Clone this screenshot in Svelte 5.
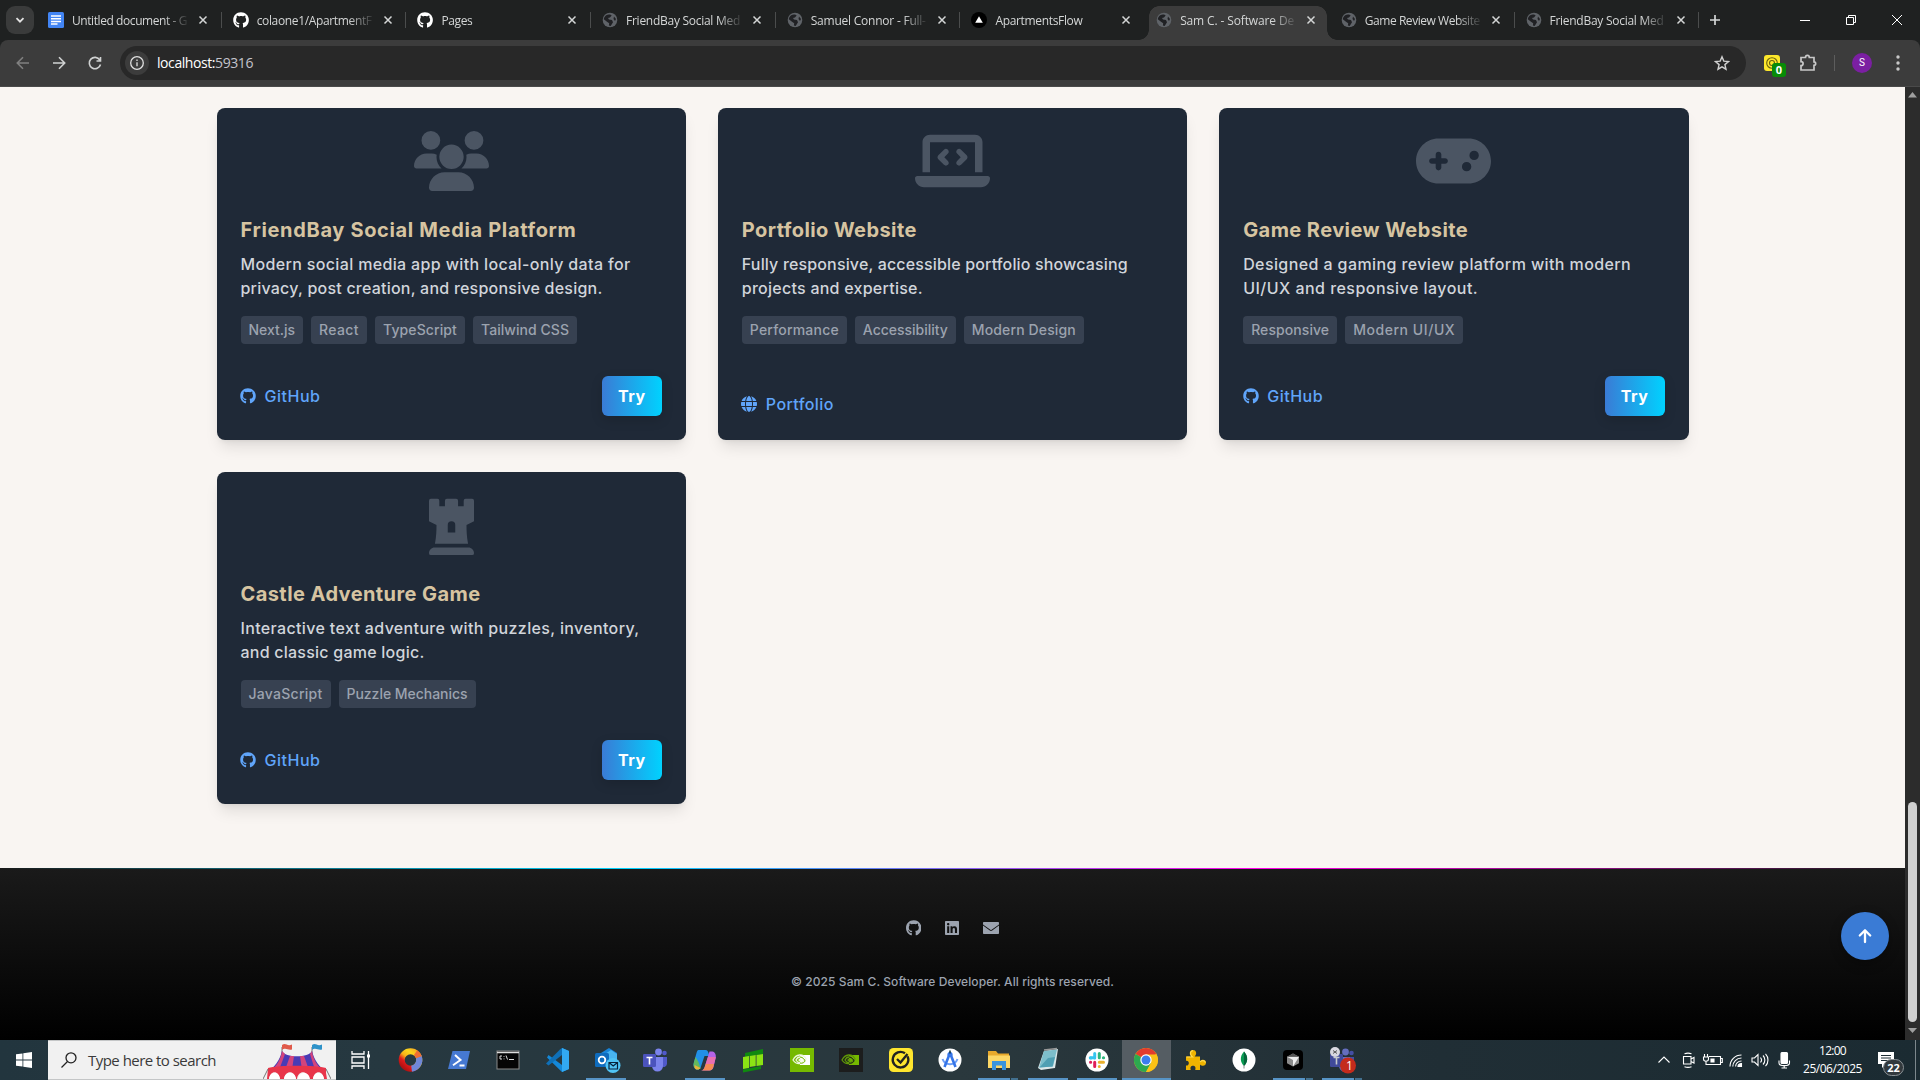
<script>
  const github =
    '<path d="M244.8 8C106.1 8 0 113.3 0 252c0 110.9 69.8 205.8 169.5 239.2 12.8 2.3 17.3-5.6 17.3-12.1 0-6.2-.3-40.4-.3-61.4 0 0-70 15-84.7-29.8 0 0-11.4-29.1-27.8-36.6 0 0-22.9-15.7 1.6-15.4 0 0 24.9 2 38.6 25.8 21.9 38.6 58.6 27.5 72.9 20.9 2.3-16 8.8-27.1 16-33.7-55.9-6.2-112.3-14.3-112.3-110.5 0-27.5 7.6-41.3 23.6-58.9-2.6-6.5-11.1-33.3 2.6-67.9 20.9-6.5 69 27 69 27 20-5.6 41.5-8.5 62.8-8.5s42.8 2.9 62.8 8.5c0 0 48.1-33.6 69-27 13.7 34.7 5.2 61.4 2.6 67.9 16 17.7 25.8 31.5 25.8 58.9 0 96.5-58.9 104.2-114.8 110.5 9.2 7.9 17 22.9 17 46.4 0 33.7-.3 75.4-.3 83.6 0 6.5 4.6 14.4 17.3 12.1C428.2 457.8 496 362.9 496 252 496 113.3 383.5 8 244.8 8z"/>';

  // Glyphs share a 512-unit height; the width varies per glyph.
  const glyphs = {
    github: { w: 496, body: github },
    globe: {
      w: 512,
      body: '<path d="M352 256c0 22.2-1.2 43.6-3.3 64H163.3c-2.2-20.4-3.3-41.8-3.3-64s1.2-43.6 3.3-64H348.7c2.2 20.4 3.3 41.8 3.3 64zm28.8-64H503.9c5.3 20.5 8.1 41.9 8.1 64s-2.8 43.5-8.1 64H380.8c2.1-20.6 3.2-42 3.2-64s-1.1-43.4-3.2-64zm112.6-32H376.7c-10-63.9-29.8-117.4-55.3-151.6c78.3 20.7 142 77.5 171.9 151.6zm-149.1 0H167.7c6.1-36.4 15.5-68.6 27-94.7c10.5-23.6 22.2-40.7 33.5-51.5C239.4 3.2 248.7 0 256 0s16.6 3.2 27.8 13.8c11.3 10.8 23 27.9 33.5 51.5c11.6 26 20.9 58.2 27 94.7zm-209 0H18.6C48.6 85.9 112.2 29.1 190.6 8.4C165.1 42.6 145.3 96.1 135.3 160zM8.1 192H131.2c-2.1 20.6-3.2 42-3.2 64s1.1 43.4 3.2 64H8.1C2.8 299.5 0 278.1 0 256s2.8-43.5 8.1-64zM194.7 446.6c-11.6-26-20.9-58.2-27-94.6H344.3c-6.1 36.4-15.5 68.6-27 94.6c-10.5 23.6-22.2 40.7-33.5 51.5C272.6 508.8 263.3 512 256 512s-16.6-3.2-27.8-13.8c-11.3-10.8-23-27.9-33.5-51.5zM135.3 352c10 63.9 29.8 117.4 55.3 151.6C112.2 482.9 48.6 426.1 18.6 352H135.3zm358.1 0c-30 74.1-93.6 130.9-171.9 151.6c25.5-34.2 45.2-87.7 55.3-151.6H493.4z"/>'
    },
    linkedin: {
      w: 448,
      body: '<path d="M416 32H31.9C14.3 32 0 46.5 0 64.3v383.4C0 465.5 14.3 480 31.9 480H416c17.6 0 32-14.5 32-32.3V64.3c0-17.8-14.4-32.3-32-32.3zM135.4 416H69V202.2h66.5V416zm-33.2-243c-21.3 0-38.5-17.3-38.5-38.5S80.9 96 102.2 96c21.2 0 38.5 17.3 38.5 38.5 0 21.3-17.2 38.5-38.5 38.5zm282.1 243h-66.4V312c0-24.8-.5-56.7-34.5-56.7-34.6 0-39.9 27-39.9 54.9V416h-66.4V202.2h63.7v29.2h.9c8.9-16.8 30.6-34.5 62.9-34.5 67.2 0 79.7 44.3 79.7 101.9V416z"/>'
    },
    envelope: {
      w: 512,
      body: '<path d="M32 64C14 64 0 78 0 96v30c0 9 4 17 11 22l226 166c11 8 27 8 38 0L501 148c7-5 11-13 11-22V96c0-18-14-32-32-32H32zM0 176V416c0 18 14 32 32 32H480c18 0 32-14 32-32V176L294.4 339.2c-22.8 17.1-54 17.1-76.8 0L0 176z"/>'
    },
    users: {
      w: 640,
      body: '<path d="M144 0a80 80 0 1 1 0 160A80 80 0 1 1 144 0zM512 0a80 80 0 1 1 0 160A80 80 0 1 1 512 0zM0 298.7C0 239.8 47.8 192 106.7 192h42.7c15.9 0 31 3.5 44.6 9.7c-1.3 7.2-1.9 14.7-1.9 22.3c0 38.2 16.8 72.5 43.3 96H21.3C9.6 320 0 310.4 0 298.7zM404.6 320c26.6-23.5 43.3-57.8 43.3-96c0-7.6-.7-15-1.9-22.3c13.6-6.3 28.7-9.7 44.6-9.7h42.7C592.2 192 640 239.8 640 298.7c0 11.8-9.6 21.3-21.3 21.3zM216 220a104 104 0 1 1 208 0 104 104 0 1 1-208 0zM128 485.3C128 411.7 187.7 352 261.3 352H378.7C452.3 352 512 411.7 512 485.3c0 14.7-11.9 26.7-26.7 26.7H154.7c-14.7 0-26.7-11.9-26.7-26.7z"/>'
    },
    laptop: {
      w: 640,
      body: '<path d="M64 96c0-35.3 28.7-64 64-64H512c35.3 0 64 28.7 64 64V352H512V96H128V352H64V96zM0 403.2C0 392.6 8.6 384 19.2 384H620.8c10.6 0 19.2 8.6 19.2 19.2c0 42.4-34.4 76.8-76.8 76.8H76.8C34.4 480 0 445.6 0 403.2zM281 193l-31 31 31 31c9.4 9.4 9.4 24.6 0 33.9s-24.6 9.4-33.9 0l-48-48c-9.4-9.4-9.4-24.6 0-33.9l48-48c9.4-9.4 24.6-9.4 33.9 0s9.4 24.6 0 33.9zM393 159l48 48c9.4 9.4 9.4 24.6 0 33.9l-48 48c-9.4 9.4-24.6 9.4-33.9 0s-9.4-24.6 0-33.9l31-31-31-31c-9.4-9.4-9.4-24.6 0-33.9s24.6-9.4 33.9 0z"/>'
    },
    gamepad: {
      w: 640,
      body: '<path d="M192 64C86 64 0 150 0 256S86 448 192 448H448c106 0 192-86 192-192s-86-192-192-192H192zM496 168a40 40 0 1 1 0 80 40 40 0 1 1 0-80zM392 304a40 40 0 1 1 80 0 40 40 0 1 1-80 0zM168 200c0-13.3 10.7-24 24-24s24 10.7 24 24v32h32c13.3 0 24 10.7 24 24s-10.7 24-24 24H216v32c0 13.3-10.7 24-24 24s-24-10.7-24-24V280H136c-13.3 0-24-10.7-24-24s10.7-24 24-24h32V200z"/>'
    },
    rook: {
      w: 384,
      body: '<path d="M368 32h-56a16 16 0 0 0-16 16v48h-48V48a16 16 0 0 0-16-16h-80a16 16 0 0 0-16 16v48H88V48a16 16 0 0 0-16-16H16A16 16 0 0 0 0 48v176l64 32c0 48.3-1.5 95-13.2 160h282.4C321.5 351 320 303.7 320 256l64-32V48a16 16 0 0 0-16-16zM224 320h-64v-64a32 32 0 0 1 64 0zM336 448H48c-26.5 0-48 21.5-48 48a16 16 0 0 0 16 16h352a16 16 0 0 0 16-16c0-26.5-21.5-48-48-48z"/>'
    }
  };

  const globeFav =
    '<circle cx="8" cy="8" r="7.3" fill="#5f6368"/><path d="M4.2 3.2C6 2 8.800 2.300 9.600 3.500L8 5.400l-2 .5 1 1.700 3 .4 1 2.300-2.300 3.600-1.800-.4.3-2.300L5 9.700 1.800 7.300C1.900 5.500 3 4 4.200 3.200z" fill="#202124"/><path d="M12 4.500l2 2.500-1 2-1.500-2z" fill="#202124"/>';
  const githubFav = `<g fill="#fff" transform="translate(.2 0) scale(.0316)">${github}</g>`;
  const favicons = {
    docs: '<rect width="16" height="16" rx="1.500" fill="#4285f4"/><path d="M3 4h10M3 6.700h10M3 9.400h10M3 12.100h6.500" stroke="#fff" stroke-width="1.500"/>',
    github: githubFav,
    globe: globeFav,
    flow: '<circle cx="8" cy="8" r="8" fill="#000"/><path d="M8 4.300l3.800 6.500H4.200z" fill="#fff"/>'
  };

  const tabs = [
    { icon: 'docs', title: 'Untitled document - G', w: 115 },
    { icon: 'github', title: 'colaone1/ApartmentF', w: 115 },
    { icon: 'github', title: 'Pages', w: 31 },
    { icon: 'globe', title: 'FriendBay Social Med', w: 114 },
    { icon: 'globe', title: 'Samuel Connor - Full-', w: 115 },
    { icon: 'flow', title: 'ApartmentsFlow', w: 87 },
    { icon: 'globe', title: 'Sam C. - Software De', w: 114, active: true },
    { icon: 'globe', title: 'Game Review Website', w: 115 },
    { icon: 'globe', title: 'FriendBay Social Med', w: 114 }
  ];

  const projects = [
    {
      icon: 'users', title: 'FriendBay Social Media Platform', tw: 336,
      lines: [['Modern social media app with local-only data for', 390], ['privacy, post creation, and responsive design.', 362]],
      tags: [['Next.js', 46.5], ['React', 40], ['TypeScript', 74], ['Tailwind CSS', 88]],
      link: ['GitHub', 56], glyph: 'github', demo: true
    },
    {
      icon: 'laptop', title: 'Portfolio Website', tw: 175,
      lines: [['Fully responsive, accessible portfolio showcasing', 386], ['projects and expertise.', 181]],
      tags: [['Performance', 89], ['Accessibility', 85], ['Modern Design', 104]],
      link: ['Portfolio', 68], glyph: 'globe', demo: false
    },
    {
      icon: 'gamepad', title: 'Game Review Website', tw: 225,
      lines: [['Designed a gaming review platform with modern', 388], ['UI/UX and responsive layout.', 235]],
      tags: [['Responsive', 78], ['Modern UI/UX', 102]],
      link: ['GitHub', 56], glyph: 'github', demo: true
    },
    {
      icon: 'rook', title: 'Castle Adventure Game', tw: 240,
      lines: [['Interactive text adventure with puzzles, inventory,', 399], ['and classic game logic.', 184]],
      tags: [['JavaScript', 74], ['Puzzle Mechanics', 121]],
      link: ['GitHub', 56], glyph: 'github', demo: true
    }
  ];

  const teams =
    '<circle cx="15.500" cy="4" r="3.400" fill="#7b83eb"/><circle cx="21.500" cy="5" r="2.300" fill="#5059c9"/><path d="M18 9h6v7a3.500 3.500 0 0 1-6 2z" fill="#5059c9"/><path d="M9 9h11v9a5.500 5.500 0 0 1-11 0z" fill="#7b83eb"/><rect y="6" width="13" height="13" rx="1.200" fill="#4b53bc"/><path d="M3.500 9.500h6M6.500 9.500v7" stroke="#fff" stroke-width="1.600"/>';
  const eye =
    '<path d="M3 12c3-6 10-7 13-1-3 5-9 7-13 1zm3 0c2-4 6-4 8 0-2 3-6 4-8 0z" fill="none" stroke="COL" stroke-width="1.300"/><circle cx="10" cy="12" r="1.600" fill="COL"/>';

  const apps = [
    { body: '<path d="M3 3v3h12V3M3 21v-3h12v3M3 9h12v6H3zM19.500 3v18" fill="none" stroke="#fff" stroke-width="1.300"/><path d="M18 6.500h3v3h-3z" fill="#fff"/>' },
    { body: '<defs><linearGradient id="ring" x1="1" y1="0" x2=".15" y2="1"><stop offset="0" stop-color="#f5a623"/><stop offset=".3" stop-color="#fbd51c"/><stop offset=".55" stop-color="#f8b21a"/><stop offset=".75" stop-color="#e01b1b"/><stop offset="1" stop-color="#b01212"/></linearGradient></defs><circle cx="12.500" cy="12" r="8.800" fill="none" stroke="url(#ring)" stroke-width="6"/><path d="M20.600 8.500a8.800 8.800 0 0 1-7 12.200" fill="none" stroke="#6f87d8" stroke-width="6"/><path d="M17.500 4.800a8.800 8.800 0 0 1 3.400 4.500" fill="none" stroke="#ee6d33" stroke-width="6"/>' },
    { body: '<path d="M5.500 3H23l-4 18H1z" fill="#4679d2"/><path d="M8 7l5.500 5L6 17.200M12.500 17.500h5" fill="none" stroke="#fff" stroke-width="2"/>' },
    { body: '<rect x="1" y="3" width="22" height="18" fill="#050505" stroke="#8a8a8a"/><path d="M1 4.500h22" stroke="#ddd" stroke-width="1.500"/><path d="M6 8H4v3h2M8 8v.8M8 10.500v.8M10 7.500l1.500 4M13 11.500h5" fill="none" stroke="#ddd" stroke-width="1"/>' },
    { body: '<path d="M17 0l7 3v18l-7 3L2 9.500 3.500 7 17 17z" fill="#1488d8"/><path d="M17 0v7L3.500 17.500 1 15.500 15 1.500z" fill="#0f70b8"/><path d="M17 0l7 3v18l-7 3z" fill="#32a9f2"/>' },
    { run: true, body: '<g transform="translate(1 0)"><path d="M6 5l8-5 8 5v14H6z" fill="#1784d9"/><path d="M10 6l6-4 6 4v8H10z" fill="#49b5f0"/><rect y="5" width="14" height="14" rx="1.500" fill="#0f6cbd"/><circle cx="7" cy="12" r="3.300" fill="none" stroke="#fff" stroke-width="1.800"/><circle cx="18" cy="17.500" r="7.500" fill="#50c4f5"/><path d="M14 14.500h8.500v6.500H14zl4.200 3.500 4.300-3.500" fill="none" stroke="#08233c" stroke-width="1.200"/></g>' },
    { body: teams },
    { run: true, body: '<g transform="translate(-.5 0)"><path d="M7 2h7c2 0 2.500 1.500 3 3l1 3h-5L9 20c-1 1.500-3 2-5 1-2-1.500-2.500-4-1.500-7L5 5c.4-1.500 1-3 2-3z" fill="#2190e8"/><path d="M2.500 14L4 9l3 5 2 6c-1 1.500-3 2-5 1-2-1.500-2.500-4-1.500-7z" fill="#63b85e"/><path d="M3 17l6 3c-1 1.500-3 2-5 1-1-.8-1-2.500-1-4z" fill="#e8b438"/><path d="M18 3.500h3c2 0 4 3 3.200 6.500l-2.200 9c-.6 2-2 3.500-4 3.500H9.500c2 0 3-1.500 3.500-3z" fill="#b563e8"/><path d="M16.500 9h7.800l-1.800 7h-8.300z" fill="#ea6fb0"/><path d="M14.200 16h8.300l-.7 3c-.6 2-1.800 3.500-3.800 3.500H9.500c2 0 3-1.500 3.500-3z" fill="#f58b54"/></g>' },
    { body: '<path d="M4 5l18-4v5L4 9z" fill="#0f8a0f"/><path d="M2 9l6-1v12l-6 1zM8.700 8l6-1v11l-6 1zM15.500 7l6.500-1v11l-6.500 1z" fill="#8be314"/><path d="M2 21.500l18-3.500v3L2 24.500z" fill="#0f8a0f"/>' },
    { body: '<rect width="24" height="24" fill="#76b900"/><path d="M10 7h10v10H10z" fill="#fff"/>' + eye.replaceAll('COL', '#eef6dd') + '<path d="M10 9c3 0 5 3 5 4s-3 3-5 2" fill="none" stroke="#76b900"/>' },
    { body: '<rect width="24" height="24" fill="#1c1d1d"/><path d="M10 7h10v10H10z" fill="#76b900"/>' + eye.replaceAll('COL', '#5f9608') + '<path d="M10 9c3 0 5 3 5 4s-3 3-5 2" fill="none" stroke="#1c1d1d"/>' },
    { body: '<rect width="24" height="24" rx="4.500" fill="#fee52e"/><path d="M18.500 8.200A7.800 7.800 0 1 1 16 5.300" fill="none" stroke="#222" stroke-width="2.300"/><path d="M8 11l3.500 3.500L18.500 6" fill="none" stroke="#222" stroke-width="2.300"/>' },
    { body: '<circle cx="12" cy="12" r="11.500" fill="#fff"/><path d="M4.500 11a8 8 0 0 0 15 0" fill="none" stroke="#6ea0f7" stroke-width="2"/><path d="M12 5L6.500 19M12 5l5.500 14" fill="none" stroke="#3776e8" stroke-width="2.600"/><circle cx="12" cy="6.500" r="2.600" fill="#3776e8"/><path d="M12 2.500v3" stroke="#073042" stroke-width="1.500"/>' },
    { run: true, split: true, body: '<path d="M1 3h8l2 2.500h11V20H1z" fill="#e8a92c"/><path d="M1 7.500h22V20H1z" fill="#fcd766"/><path d="M5 22v-9h14v9h-4v-4.500H9V22z" fill="#3994dc"/>' },
    { run: true, body: '<path d="M8 3l14-2-3 19-14 2-3-2z" fill="#dce8ea"/><path d="M8 3l13-1.500-4 17-14 1z" fill="#7dbecb"/><path d="M12 10l7-1-2.500 9.500-13 1z" fill="#4f9fb3"/><path d="M8 2l13-1.500" stroke="#999" stroke-width="1.500"/>' },
    { run: true, body: '<circle cx="12" cy="12" r="11.500" fill="#fff"/><g fill="none" stroke-width="3" stroke-linecap="round"><path d="M9.700 5.500v4.500M5.500 10H6" stroke="#36c5f0"/><path d="M5.300 9.800h4.200" stroke="#36c5f0"/><path d="M14.300 5.500v4.300M18.400 9.800h.2" stroke="#2eb67d"/><path d="M14.300 14.300h4.200M14.300 18.500v.1" stroke="#ecb22e"/><path d="M9.700 14.300v4.300M5.500 14.300h.2" stroke="#e01e5a"/></g>' },
    { run: true, active: true, body: '<circle cx="12" cy="12" r="12" fill="#fbc116"/><path d="M12 12L1.600 6A12 12 0 0 1 22.400 6z" fill="#e33b2e"/><path d="M1.600 6A12 12 0 0 0 12 24l5-9-5-3z" fill="#2da94f"/><path d="M12 6.500h10.600A12 12 0 0 1 12 24l5-9z" fill="#fbc116"/><circle cx="12" cy="12" r="5.700" fill="#fff"/><circle cx="12" cy="12" r="4.500" fill="#3b7ded"/>' },
    { body: '<path d="M3 8.500h5.300C5.500 5.500 7 2 10 2s4.500 3.500 1.700 6.500H17v4.800c2.500-2.800 6-1.500 6 1.500s-3.500 4.300-6 1.600V22h-4.800c1-3-.5-4.300-2.200-4.300S6.800 19 7.800 22H3v-4.500c3.800.8 3.800-5.500 0-4.700z" fill="#f0b400"/><path d="M3.500 9h6C6 6 7.500 2.600 10 2.600M17 14c1.800-2.300 5.300-1.500 5.300.8" fill="none" stroke="#ffdc55" stroke-width="1.200"/>' },
    { body: '<circle cx="12" cy="12" r="11.500" fill="#fff"/><path d="M12 3.500c4.500 5 4 10.500 0 14.500-4-4-4.500-9.500 0-14.500z" fill="#0a9a52"/><path d="M12 3.500c4.500 5 4 10.500 0 14.500z" fill="#07643b"/><path d="M12 17v3.500" stroke="#888"/>' },
    { run: true, split: true, body: '<rect x="2" y="2" width="20" height="20" rx="4" fill="#000"/><path d="M12 5.500l6 3.300v6.500l-6 3.300-6-3.300V8.800z" fill="#8b8b8b"/><path d="M6 8.800h12l-6 9.800V12z" fill="#eee"/><path d="M12 5.500l6 3.300H6z" fill="#555"/>' },
    { run: true, split: true, body: '<g opacity=".75">' + teams + '</g><circle cx="5" cy="4" r="5" fill="#d8d8e0"/><path d="M3 2.500l4 3M7 2.500l-4 3" stroke="#555"/><circle cx="18" cy="17.500" r="8" fill="#c42b1c"/>', count: '1' }
  ];

  // Spreads a run of text over a given measure by adjusting its tracking.
  function measure(node, width) {
    const natural = node.getBoundingClientRect().width;
    const tracking = (width - natural) / node.textContent.length;
    node.style.letterSpacing = `${tracking.toFixed(3)}px`;
  }
</script>

{#snippet glyph(name, cls)}
  <svg class={cls} viewBox="0 0 {glyphs[name].w} 512" fill="currentColor">{@html glyphs[name].body}</svg>
{/snippet}

<div class="screen">
  <header class="strip">
    <button class="search-tabs" aria-label="Search tabs">
      <svg width="12" height="12" viewBox="0 0 12 12"><path d="M2.500 4.200L6 7.700l3.500-3.500" /></svg>
    </button>
    <div class="tabs">
      {#each tabs as tab, i}
        <div class="tab" class:active={tab.active} class:divided={i !== 5 && i !== 6}>
          <svg class="fav" viewBox="0 0 16 16">{@html favicons[tab.icon]}</svg>
          <div class="label"><span use:measure={tab.w}>{tab.title}</span></div>
          <svg class="x" viewBox="0 0 10 10"><path d="M1.500 1.500l7 7M8.500 1.500l-7 7" /></svg>
        </div>
      {/each}
    </div>
    <svg class="plus" viewBox="0 0 28 28"><path d="M14 9v10M9 14h10" /></svg>
    <div class="window">
      <svg viewBox="0 0 46 40"><path d="M18 20.500h10" /></svg>
      <svg viewBox="0 0 46 40"><path d="M18.500 17.500h7v7h-7zM20.500 17.500v-2h7v7h-2" /></svg>
      <svg viewBox="0 0 46 40"><path d="M18 15l10 10M28 15l-10 10" /></svg>
    </div>
  </header>

  <nav class="toolbar">
    <svg class="nav dim" viewBox="0 0 36 36"><path d="M24 18H12.500M18 12.300L12.300 18l5.700 5.700" /></svg>
    <svg class="nav" viewBox="0 0 36 36"><path d="M12 18h11.500M18 12.300l5.700 5.700-5.700 5.700" /></svg>
    <svg class="nav" viewBox="0 0 36 36"><path d="M22.800 15A5.700 5.700 0 1 0 23.500 19.500M23.500 12v4h-4" /></svg>
    <div class="omnibox">
      <span class="info"><svg viewBox="0 0 16 16"><circle cx="8" cy="8" r="6.300" /><path d="M8 7.300v4M8 4.500v1.500" /></svg></span>
      <span class="url" use:measure={96}>localhost:<i>59316</i></span>
      <svg class="star" viewBox="0 0 16 16"><path d="M8 1.800l1.800 4.300 4.700.4-3.600 3.100 1.100 4.600L8 11.800l-4 2.400 1.100-4.600-3.600-3.100 4.700-.4z" /></svg>
    </div>
    <span class="ext">
      <svg viewBox="0 0 16 16"><rect width="16" height="16" rx="3" fill="#fde82b" /><g fill="none" stroke="#6a6010" stroke-width="1.100"><circle cx="8" cy="8" r="5.300" /><circle cx="8" cy="8" r="2.500" /></g></svg>
      <b>0</b>
    </span>
    <svg class="puzzle" viewBox="0 0 20 20"><path d="M3 4.500h4.500c0-2.800 3.800-2.800 3.800 0h4.700v4.300c2.200 0 2.200 3.600 0 3.600v4.600H3v-4.300c2.800 0 2.800-4 0-4z" /></svg>
    <span class="rule"></span>
    <span class="avatar">S</span>
    <svg class="dots" viewBox="0 0 6 18"><circle cx="3" cy="3" r="1.700" /><circle cx="3" cy="9" r="1.700" /><circle cx="3" cy="15" r="1.700" /></svg>
  </nav>

  <div class="viewport">
    <div class="page">
      <main class="grid">
        {#each projects as p}
          <article class="card">
            <div class="art">{@render glyph(p.icon, 'hero')}</div>
            <h3><span use:measure={p.tw}>{p.title}</span></h3>
            <p>
              {#each p.lines as [line, w]}
                <span use:measure={w}>{line}</span>
              {/each}
            </p>
            <div class="tags">
              {#each p.tags as [tag, w]}
                <span class="tag"><span use:measure={w}>{tag}</span></span>
              {/each}
            </div>
            <div class="actions">
              <span class="link">{@render glyph(p.glyph, 'mini')}<span use:measure={p.link[1]}>{p.link[0]}</span></span>
              {#if p.demo}<button class="try"><span use:measure={27.500}>Try</span></button>{/if}
            </div>
          </article>
        {/each}
      </main>
      <footer>
        <div class="social">
          {@render glyph('github', 'soc')}
          {@render glyph('linkedin', 'soc')}
          {@render glyph('envelope', 'soc')}
        </div>
        <small><span use:measure={323}>© 2025 Sam C. Software Developer. All rights reserved.</span></small>
        <button class="top" aria-label="Back to top">
          <svg viewBox="0 0 16 16"><path d="M8 14V2.500M2.800 7.500L8 2.300l5.200 5.200" /></svg>
        </button>
      </footer>
    </div>
    <div class="scroll">
      <svg viewBox="0 0 15 15"><path d="M7.500 5L12 10.500H3z" /></svg>
      <span class="thumb"></span>
      <svg viewBox="0 0 15 15"><path d="M7.500 10L12 5H3z" /></svg>
    </div>
  </div>

  <div class="taskbar">
    <svg class="start" viewBox="0 0 48 40"><path d="M16 14.300l6.500-.9v6.100H16zM23.300 13.300L32 12v7.500h-8.700zM16 20.400h6.500v6.200l-6.500-.9zM23.300 20.400H32V28l-8.700-1.300z" fill="#fff" /></svg>
    <div class="find">
      <svg class="lens" viewBox="0 0 18 18"><circle cx="11" cy="6.800" r="5" /><path d="M7.500 10.500L1.500 16.500" /></svg>
      <span use:measure={128}>Type here to search</span>
      <svg class="tent" viewBox="0 0 68 38">
        <path d="M19 6v11M49 6v11" stroke="#777" />
        <path d="M19 4c4-3 5 2 10-.5v5C25 10 23 6 19 9z" fill="#e05a4a" />
        <path d="M49 4c4-3 5 2 10-.5v5C55 10 53 6 49 9z" fill="#2f93c9" />
        <path d="M19 10c3 7 27 7 30 0 2 9 8 17 14 20H5C11 27 17 19 19 10z" fill="#4a3bb5" />
        <path d="M19 10l3 3-6 16H9c5-5 9-11 10-19zM27 15h4l-2 14h-7zM37 15h4l5 14h-7zM47 13l2-3c1 8 5 14 10 19h-7z" fill="#d3447c" />
        <path d="M5 27c10-3 48-3 58 0v5l1 6h-3c-1-9-10-9-11 0h-4c-1-9-11-9-12 0-1 0-1 0-1 0-1-9-11-9-12 0h-4c-1-9-10-9-11 0H4z" fill="#e8354a" />
        <path d="M6 38c1-8 10-8 11 0zM21 38c1-8 11-8 12 0zM35 38c1-8 11-8 12 0zM50 38c1-8 10-8 11 0z" fill="#fff" />
        <path d="M5 28L0 38M63 28l5 10" stroke="#777" />
      </svg>
    </div>
    <div class="apps">
      {#each apps as app}
        <span class="app" class:run={app.run} class:split={app.split} class:current={app.active}>
          <svg viewBox="0 0 24 24">{@html app.body}</svg>
          {#if app.count}<em>{app.count}</em>{/if}
        </span>
      {/each}
    </div>
    <div class="tray">
      <svg viewBox="0 0 24 24"><path d="M6.500 14.500L12 9l5.500 5.500" /></svg>
      <svg viewBox="0 0 24 24"><path d="M7.500 8.500h7.500v7.500H7.500zM15 11l3-1.500v5.500L15 13.500M8.500 5.800c2.500-1 4.500-1 7 0M8.500 18.700c2.500 1 4.500 1 7 0" /></svg>
      <svg viewBox="0 0 24 24"><path d="M9 8.500h11.500v8H9M20.500 10.500h1.800v4h-1.800M4.500 6v3M7.500 6v3M3.500 9h5v2c0 3-5 3-5 0zM6 13v3.500h3" /><path d="M11 11h3v3h-3z" fill="#fff" /></svg>
      <svg viewBox="0 0 24 24"><path d="M6 18.500C6 12 11 7 17.500 7M8.800 18.500c0-4.500 3.700-8.500 8.700-8.500M11.600 18.500c0-3 2.500-5.500 5.900-5.500" /><path d="M14 18.500c0-2 1.500-3 3.500-3v3z" fill="#fff" /></svg>
      <svg viewBox="0 0 24 24"><path d="M4 10h2.500L10 6.500v11L6.500 14H4zM12.500 9.500c1.300 1.500 1.300 3.500 0 5M15 7.500c2.500 2.600 2.500 6.400 0 9M17.500 5.800c3.300 3.500 3.300 8.900 0 12.400" /></svg>
      <svg viewBox="0 0 24 24"><rect x="9" y="4.500" width="6.500" height="11" rx="1" fill="#fff" /><path d="M7 12.500v2.500c0 3.500 10.500 3.500 10.500 0v-2.500M12.200 17.500v2.500M9.500 20h5.500" /></svg>
    </div>
    <div class="clock"><span use:measure={27}>12:00</span><span use:measure={59}>25/06/2025</span></div>
    <div class="notes">
      <svg viewBox="0 0 18 18"><path d="M1 1h16v12H9l-4 4v-4H1z" fill="#fff" /><path d="M4 4.500h10M4 7h10M4 9.500h7" stroke="#1d2d34" /></svg>
      <b>22</b>
    </div>
    <span class="peek"></span>
  </div>
</div>

<style>
  :global(body) { margin: 0; overflow: hidden; background: #f9f5f2; }
  .screen {
    width: 1920px; height: 1080px; display: flex; flex-direction: column; overflow: hidden;
    font-family: "Open Sans", "Noto Sans", sans-serif; color: #dfe1e3;
  }
  svg { display: block; flex: none; }
  button { border: 0; padding: 0; font: inherit; color: inherit; }
  span { white-space: nowrap; }

  .strip { height: 40px; display: flex; align-items: center; background: #1f2121; isolation: isolate; flex: none; z-index: 1; }
  .search-tabs {
    width: 28px; height: 28px; margin: 0 4px 0 6px; border-radius: 9px; background: #3a3b3b;
    display: grid; place-items: center;
  }
  .search-tabs path { fill: none; stroke: #e3e3e3; stroke-width: 1.8; }
  .tabs { display: flex; }
  .tab {
    width: 184.700px; height: 40px; box-sizing: border-box; padding-left: 10px; display: flex; align-items: center;
    position: relative; font-size: 12px; color: #d4d6d6;
  }
  .divided::after { content: ""; position: absolute; right: 1px; top: 12px; width: 1px; height: 16px; background: #4b4d4d; }
  .active::before {
    content: ""; position: absolute; z-index: -1; left: -7px; right: -6px; top: 6px; bottom: 0;
    background:
      radial-gradient(circle at 0 0, transparent 9.500px, #3c3c3c 10px) left bottom / 10px 10px no-repeat,
      radial-gradient(circle at 100% 0, transparent 9.500px, #3c3c3c 10px) right bottom / 10px 10px no-repeat,
      radial-gradient(circle at 10px 10px, #3c3c3c 9.500px, transparent 10px) 10px 0 / 10px 10px no-repeat,
      radial-gradient(circle at 0 10px, #3c3c3c 9.500px, transparent 10px) calc(100% - 10px) 0 / 10px 10px no-repeat,
      linear-gradient(#3c3c3c, #3c3c3c) 20px 0 / calc(100% - 40px) 100% no-repeat,
      linear-gradient(#3c3c3c, #3c3c3c) 10px 10px / calc(100% - 20px) 100% no-repeat;
  }
  .fav { width: 16px; height: 16px; }
  .label {
    width: 118px; margin: 1px 0 0 8px; line-height: 18px;
    mask-image: linear-gradient(90deg, #000 92px, transparent 118px);
  }
  .label span { display: inline-block; }
  .x { width: 10px; height: 10px; margin-left: 8px; }
  .x path { stroke: #d4d6d6; stroke-width: 1.5; }
  .plus { width: 28px; height: 28px; margin-left: 1px; }
  .plus path { stroke: #d4d6d6; stroke-width: 1.7; }
  .window { margin-left: auto; display: flex; }
  .window svg { width: 46px; height: 40px; }
  .window path { fill: none; stroke: #fff; }

  .toolbar {
    height: 47px; box-sizing: border-box; flex: none; display: flex; align-items: center;
    background: #3c3c3c; border-bottom: 1px solid #4a4a4a; padding-left: 5px; border-radius: 8px 8px 0 0;
    box-shadow: 0 -8px #1f2121; z-index: 0; clip-path: inset(0);
  }
  .nav { width: 36px; height: 36px; fill: none; stroke: #d0d2d2; stroke-width: 1.6; }
  .dim { stroke: #808080; }
  .omnibox { width: 1626px; height: 34px; margin-left: 7px; border-radius: 17px; background: #282828; display: flex; align-items: center; }
  .info { width: 24px; height: 24px; margin-left: 5px; border-radius: 50%; background: #3c3c3c; display: grid; place-items: center; }
  .info svg { width: 16px; height: 16px; fill: none; stroke: #e0e0e0; stroke-width: 1.300; }
  .url { margin-left: 8px; margin-top: -1px; font-size: 14px; color: #fff; }
  .url i { font-style: normal; color: #c4c4cc; }
  .star { width: 16px; height: 16px; margin-left: auto; margin-right: 16px; fill: none; stroke: #d0d0d0; stroke-width: 1.400; }
  .ext { position: relative; margin-left: 18px; width: 16px; }
  .ext svg { width: 16px; height: 16px; }
  .ext b {
    position: absolute; left: 8px; top: 8px; width: 14px; height: 14px; border-radius: 3px; background: #078c07;
    color: #fff; font: bold 11px/14px "Open Sans", sans-serif; text-align: center;
  }
  .puzzle { width: 20px; height: 20px; margin-left: 18px; fill: none; stroke: #c8c8c8; stroke-width: 1.700; }
  .rule { width: 1px; height: 16px; background: #5d5d5d; margin-left: 16px; }
  .avatar {
    width: 20px; height: 20px; margin-left: 17px; border-radius: 50%; background: #7b1fa2; color: #fff;
    font: 10px/20px Roboto, sans-serif; text-align: center;
  }
  .dots { width: 6px; height: 18px; margin-left: 23px; fill: #c8c8c8; }

  .viewport { height: 953px; display: flex; flex: none; }
  .page { width: 1905px; background: #f9f5f2; font-family: Inter, "Noto Sans", sans-serif; }
  .grid {
    width: 1472px; height: 781px; box-sizing: border-box; margin: 0 auto; padding-top: 21px;
    display: grid; grid-template-columns: repeat(3, 1fr); grid-auto-rows: 332px; gap: 32px;
  }
  .card {
    box-sizing: border-box; padding: 23px 24px 24px; border-radius: 8px; background: #1f2937; display: flex; flex-direction: column;
    box-shadow: 0 10px 15px -3px rgba(0, 0, 0, .1), 0 4px 6px -4px rgba(0, 0, 0, .1);
  }
  .art { height: 60px; display: flex; justify-content: center; color: #4b5563; margin-bottom: 25px; }
  .art :global(.hero) { height: 60px; }
  h3 { margin: 0 0 8px; font-size: 20px; line-height: 28px; font-weight: 700; color: #d6c4a1; }
  h3 span { display: inline-block; }
  p { margin: 0 0 16px; display: flex; flex-direction: column; align-items: flex-start; font-size: 16px; line-height: 24px; font-weight: 500; color: #d1d5db; }
  .tags { display: flex; gap: 8px; }
  .tag {
    padding: 0 8px; height: 28px; border-radius: 4px; background: #374151; color: #9ca3af;
    font-size: 14px; line-height: 28px; font-weight: 500;
  }
  .tag span { display: block; }
  .actions { margin-top: auto; display: flex; justify-content: space-between; align-items: center; }
  .link { display: flex; align-items: center; gap: 8px; color: #60a5fa; font-size: 16px; line-height: 24px; font-weight: 500; }
  .link :global(.mini) { height: 16px; width: 16px; margin: 0 .500px 0 -.500px; }
  .try {
    width: 60px; height: 40px; border-radius: 6px; background: linear-gradient(90deg, #3a7bd5, #00d2ff); color: #fff;
    font-size: 16px; font-weight: 700; box-shadow: 0 4px 12px rgba(0, 0, 0, .15);
  }
  .try span { display: inline-block; }

  footer {
    height: 172px; position: relative; display: flex; flex-direction: column; align-items: center;
    background:
      linear-gradient(90deg, transparent, #00d2ff 33%, #ff00ea 66%, transparent) top / 100% 1px no-repeat,
      linear-gradient(#1a1a1a, #000);
    color: #9ca3af;
  }
  .social { display: flex; gap: 24px; margin-top: 52px; align-items: center; }
  .social :global(.soc) { height: 16px; }
  small { margin-top: 36px; font-size: 12px; line-height: 20px; font-weight: 500; }
  small span { display: inline-block; }
  .top {
    position: absolute; right: 16px; top: 44px; width: 48px; height: 48px; border-radius: 50%; background: #3a7bd5;
    display: grid; place-items: center; box-shadow: 0 4px 12px rgba(0, 0, 0, .3);
  }
  .top svg { width: 16px; height: 16px; fill: none; stroke: #fff; stroke-width: 2.300; stroke-linecap: round; stroke-linejoin: round; }

  .scroll { width: 15px; background: #2c2c2c; display: flex; flex-direction: column; align-items: center; }
  .scroll svg { width: 15px; height: 15px; fill: #9f9f9f; }
  .scroll svg:last-child { margin: 1px 0 2px; }
  .thumb { margin-top: auto; width: 9px; height: 220px; border-radius: 5px; background: #d0d0d0; }

  .taskbar {
    height: 40px; flex: none; display: flex; align-items: center;
    background: linear-gradient(90deg, #22353e, #263840 20%, #2a383d 50%, #202e35 75%, #1b2b32);
  }
  .start { width: 48px; height: 40px; }
  .find {
    width: 288px; height: 40px; box-sizing: border-box; display: flex; align-items: center; padding-left: 12px;
    background: #f1f1f1; border: 1px solid #c4c6c7; border-right: 0; border-left: 0; color: #3a3a3a; font-size: 15px;
  }
  .lens { width: 18px; height: 18px; margin-right: 10px; fill: none; stroke: #222; stroke-width: 1.300; }
  .tent { width: 68px; height: 38px; margin-left: auto; margin-right: 5px; fill: none; }
  .apps { display: flex; }
  .app { width: 49.100px; height: 40px; display: grid; place-items: center; position: relative; }
  .app svg { width: 24px; height: 24px; overflow: visible; }
  .run { background: linear-gradient(#5794c6, #5794c6) 5px 100% / 40px 2px no-repeat; }
  .split {
    background:
      linear-gradient(#5794c6, #5794c6) 4px 100% / 32px 2px no-repeat,
      linear-gradient(#42708f, #42708f) 37px 100% / 7px 2px no-repeat;
  }
  .current { background: linear-gradient(#5794c6, #5794c6) 0 100% / 100% 2px no-repeat, #555d63; }
  .app em { position: absolute; left: 28px; top: 17px; width: 6px; font: 12px/18px "Open Sans", sans-serif; color: #fff; }
  .tray { margin-left: auto; display: flex; }
  .tray svg { width: 24px; height: 24px; fill: none; stroke: #fff; stroke-width: 1.100; }
  .clock { width: 73px; display: flex; flex-direction: column; align-items: center; font-size: 12px; line-height: 18px; color: #fff; }
  .notes { position: relative; width: 18px; margin: 0 20px 0 8px; }
  .notes svg { width: 18px; height: 18px; }
  .notes b {
    position: absolute; left: 6px; top: 8px; width: 19px; height: 15px; border: 1px solid #8a9195; border-radius: 9px;
    background: #32393d; color: #fff; font: bold 11px/15px "Open Sans", sans-serif; text-align: center;
  }
  .peek { width: 1px; height: 40px; background: #7c878c; margin-right: 4px; }
</style>
